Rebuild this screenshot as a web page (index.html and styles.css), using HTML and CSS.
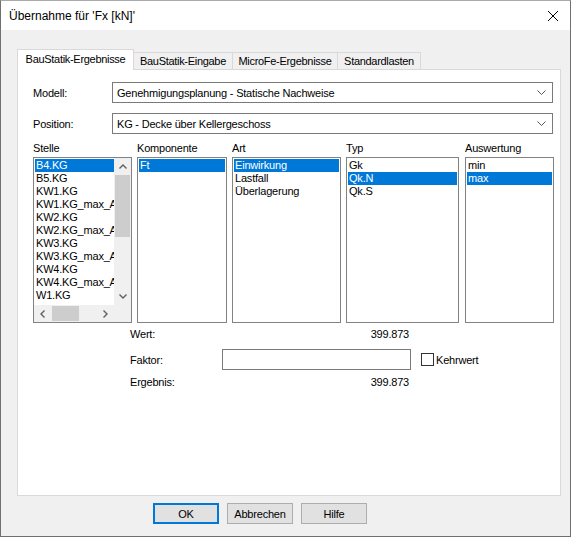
FILE: index.html
```html
<!DOCTYPE html>
<html>
<head>
  <title>Übernahme für 'Fx [kN]'</title>
  <link rel="stylesheet" href="styles.css">
</head>
<body>
  <div class="window">
    <div class="titlebar">
      <span class="title">Übernahme für 'Fx [kN]'</span>
      <svg class="close" width="12" height="12" viewBox="0 0 12 12">
        <path d="M1 1 L11 11 M11 1 L1 11" stroke="#000" stroke-width="1" fill="none"/>
      </svg>
    </div>

    <div class="client">
      <div class="tabs">
        <div class="tab tab-1 active">BauStatik-Ergebnisse</div>
        <div class="tab tab-2">BauStatik-Eingabe</div>
        <div class="tab tab-3">MicroFe-Ergebnisse</div>
        <div class="tab tab-4">Standardlasten</div>
      </div>

      <div class="panel">
        <div class="form-row">
          <label>Modell:</label>
          <div class="combo">
            <span>Genehmigungsplanung - Statische Nachweise</span>
            <svg width="9" height="5" viewBox="0 0 9 5"><path d="M0.5 0.5 L4.5 4.5 L8.5 0.5" stroke="#555" fill="none"/></svg>
          </div>
        </div>
        <div class="form-row">
          <label>Position:</label>
          <div class="combo">
            <span>KG - Decke über Kellergeschoss</span>
            <svg width="9" height="5" viewBox="0 0 9 5"><path d="M0.5 0.5 L4.5 4.5 L8.5 0.5" stroke="#555" fill="none"/></svg>
          </div>
        </div>

        <div class="lists">
          <div class="list-label">Stelle</div>
          <div class="list-label">Komponente</div>
          <div class="list-label">Art</div>
          <div class="list-label">Typ</div>
          <div class="list-label col-last">Auswertung</div>

          <!-- Stelle has both scrollbars -->
          <div class="listbox scrolling">
            <div class="list-main">
              <div class="items">
                <div class="item selected">B4.KG</div>
                <div class="item">B5.KG</div>
                <div class="item">KW1.KG</div>
                <div class="item">KW1.KG_max_A</div>
                <div class="item">KW2.KG</div>
                <div class="item">KW2.KG_max_A</div>
                <div class="item">KW3.KG</div>
                <div class="item">KW3.KG_max_A</div>
                <div class="item">KW4.KG</div>
                <div class="item">KW4.KG_max_A</div>
                <div class="item">W1.KG</div>
              </div>
              <div class="vscroll">
                <div class="sb-btn">
                  <svg width="8" height="5" viewBox="0 0 8 5"><path d="M0.5 4.5 L4 1 L7.5 4.5" stroke="#606060" stroke-width="1.4" fill="none"/></svg>
                </div>
                <div class="vtrack"><div class="vthumb"></div></div>
                <div class="sb-btn">
                  <svg width="8" height="5" viewBox="0 0 8 5"><path d="M0.5 0.5 L4 4 L7.5 0.5" stroke="#606060" stroke-width="1.4" fill="none"/></svg>
                </div>
              </div>
            </div>
            <div class="hscroll">
              <div class="sb-btn">
                <svg width="5" height="8" viewBox="0 0 5 8"><path d="M4.5 0.5 L1 4 L4.5 7.5" stroke="#606060" stroke-width="1.4" fill="none"/></svg>
              </div>
              <div class="htrack"><div class="hthumb"></div></div>
              <div class="sb-btn">
                <svg width="5" height="8" viewBox="0 0 5 8"><path d="M0.5 0.5 L4 4 L0.5 7.5" stroke="#606060" stroke-width="1.4" fill="none"/></svg>
              </div>
              <div class="corner"></div>
            </div>
          </div>

          <div class="listbox">
            <div class="item selected">Ft</div>
          </div>

          <div class="listbox">
            <div class="item selected">Einwirkung</div>
            <div class="item">Lastfall</div>
            <div class="item">Überlagerung</div>
          </div>

          <div class="listbox">
            <div class="item">Gk</div>
            <div class="item selected">Qk.N</div>
            <div class="item">Qk.S</div>
          </div>

          <div class="listbox col-last">
            <div class="item">min</div>
            <div class="item selected">max</div>
          </div>
        </div>

        <div class="results">
          <div class="res-row row-wert">
            <span>Wert:</span>
            <span class="value">399.873</span>
          </div>
          <div class="res-row row-faktor">
            <span>Faktor:</span>
            <input type="text" class="edit">
            <label class="check"><span class="box"></span>Kehrwert</label>
          </div>
          <div class="res-row row-ergebnis">
            <span>Ergebnis:</span>
            <span class="value">399.873</span>
          </div>
        </div>
      </div>

      <div class="buttons">
        <button class="button default">OK</button>
        <button class="button">Abbrechen</button>
        <button class="button">Hilfe</button>
      </div>
    </div>
  </div>
</body>
</html>
```

FILE: styles.css
```css
/* Windows style dialog */
body {
  margin: 0;
  padding: 0;
  font-family: "Liberation Sans", Arial, sans-serif;
  font-size: 11px;
  letter-spacing: -0.2px;
  color: #000;
}

.window {
  width: 571px;
  height: 537px;
  box-sizing: border-box;
  border: 1px solid #707070;
  border-top-color: #aaa;
  background-color: #f0f0f0;
}

.titlebar {
  height: 29px;
  background-color: #fff;
  display: flex;
  align-items: center;
  justify-content: space-between;
  padding: 0 11px 0 8px;
}

.title {
  font-size: 12px;
  letter-spacing: 0;
  padding-top: 1px;
}

.close {
  display: block;
}

.client {
  padding: 19px 9px 0 16px;
}

/* Tabs */
.tabs {
  display: flex;
  align-items: flex-end;
  height: 20px;
}

.tab {
  box-sizing: border-box;
  height: 17px;
  border-top: 1px solid #d9d9d9;
  border-right: 1px solid #d9d9d9;
  background-color: #f0f0f0;
  text-align: center;
  line-height: 16px;
  letter-spacing: -0.3px;
}

.tab.active {
  position: relative;
  z-index: 1;
  height: 21px;
  margin-bottom: -1px;
  border-left: 1px solid #d9d9d9;
  background-color: #fff;
  line-height: 18px;
}

.tab-1 { width: 117px; }
.tab-2 { width: 99px; }
.tab-3 { width: 105px; }
.tab-4 { width: 83px; }

.panel {
  box-sizing: border-box;
  width: 544px;
  height: 427px;
  border: 1px solid #d9d9d9;
  background-color: #fff;
  padding: 12px 6px 0 15px;
}

/* Modell / Position */
.form-row {
  display: grid;
  grid-template-columns: 79px 441px;
  align-items: center;
}

.form-row + .form-row {
  margin-top: 10px;
}

.combo {
  box-sizing: border-box;
  height: 21px;
  border: 1px solid #7a7a7a;
  background-color: #fff;
  display: flex;
  align-items: center;
  justify-content: space-between;
  padding: 0 6px 0 4px;
}

/* Lists */
.lists {
  display: grid;
  grid-template-columns: 99px 90px 109px 113px 90px;
  column-gap: 5px;
  margin-top: 8px;
}

.col-last {
  margin-left: 1px;
}

.list-label {
  line-height: 13px;
  margin-bottom: 2px;
}

.listbox {
  box-sizing: border-box;
  height: 166px;
  border: 1px solid #828282;
  background-color: #fff;
  padding: 1px;
}

.item {
  height: 13px;
  line-height: 13px;
  padding-left: 1px;
  white-space: nowrap;
  overflow: hidden;
}

.item.selected {
  background-color: #0078d7;
  color: #fff;
}

.listbox.scrolling {
  padding: 0;
  display: flex;
  flex-direction: column;
}

.list-main {
  display: flex;
  flex: 1;
  min-height: 0;
}

.list-main .items {
  flex: 1;
  padding: 1px 0 0 1px;
  overflow: hidden;
}

.vscroll {
  width: 17px;
  display: flex;
  flex-direction: column;
  background-color: #f0f0f0;
}

.sb-btn {
  width: 17px;
  height: 17px;
  display: flex;
  align-items: center;
  justify-content: center;
  background-color: #f0f0f0;
}

.sb-btn svg {
  display: block;
}

.vtrack {
  flex: 1;
}

.vthumb {
  height: 62px;
  margin: 0 1px;
  background-color: #cdcdcd;
}

.hscroll {
  height: 17px;
  display: flex;
  background-color: #f0f0f0;
}

.htrack {
  flex: 1;
  display: flex;
  align-items: center;
}

.hthumb {
  width: 27px;
  height: 15px;
  margin-left: 1px;
  background-color: #cdcdcd;
}

.corner {
  width: 17px;
  background-color: #f0f0f0;
}

/* Wert / Faktor / Ergebnis */
.results {
  margin: 1px 0 0 97px;
}

.res-row {
  display: grid;
  grid-template-columns: 92px 189px auto;
  align-items: center;
}

.row-wert,
.row-ergebnis {
  height: 20px;
}

.row-faktor {
  height: 21px;
  margin: 5px 0 2px;
}

.value {
  text-align: right;
  padding-right: 2px;
}

.edit {
  box-sizing: border-box;
  width: 189px;
  height: 21px;
  margin: 0;
  border: 1px solid #7a7a7a;
  background-color: #fff;
}

.check {
  display: flex;
  align-items: center;
  margin-left: 10px;
}

.box {
  box-sizing: border-box;
  width: 13px;
  height: 13px;
  border: 1px solid #333;
  background-color: #fff;
  margin-right: 2px;
}

/* Buttons */
.buttons {
  display: flex;
  gap: 8px;
  margin: 7px 0 0 136px;
}

.button {
  box-sizing: border-box;
  width: 66px;
  height: 21px;
  margin: 0;
  padding: 0;
  border: 1px solid #adadad;
  background-color: #e1e1e1;
  font-family: "Liberation Sans", Arial, sans-serif;
  font-size: 11px;
  letter-spacing: -0.2px;
  color: #000;
}

.button.default {
  border-color: #0078d7;
  box-shadow: inset 0 0 0 1px #0078d7;
}
```
